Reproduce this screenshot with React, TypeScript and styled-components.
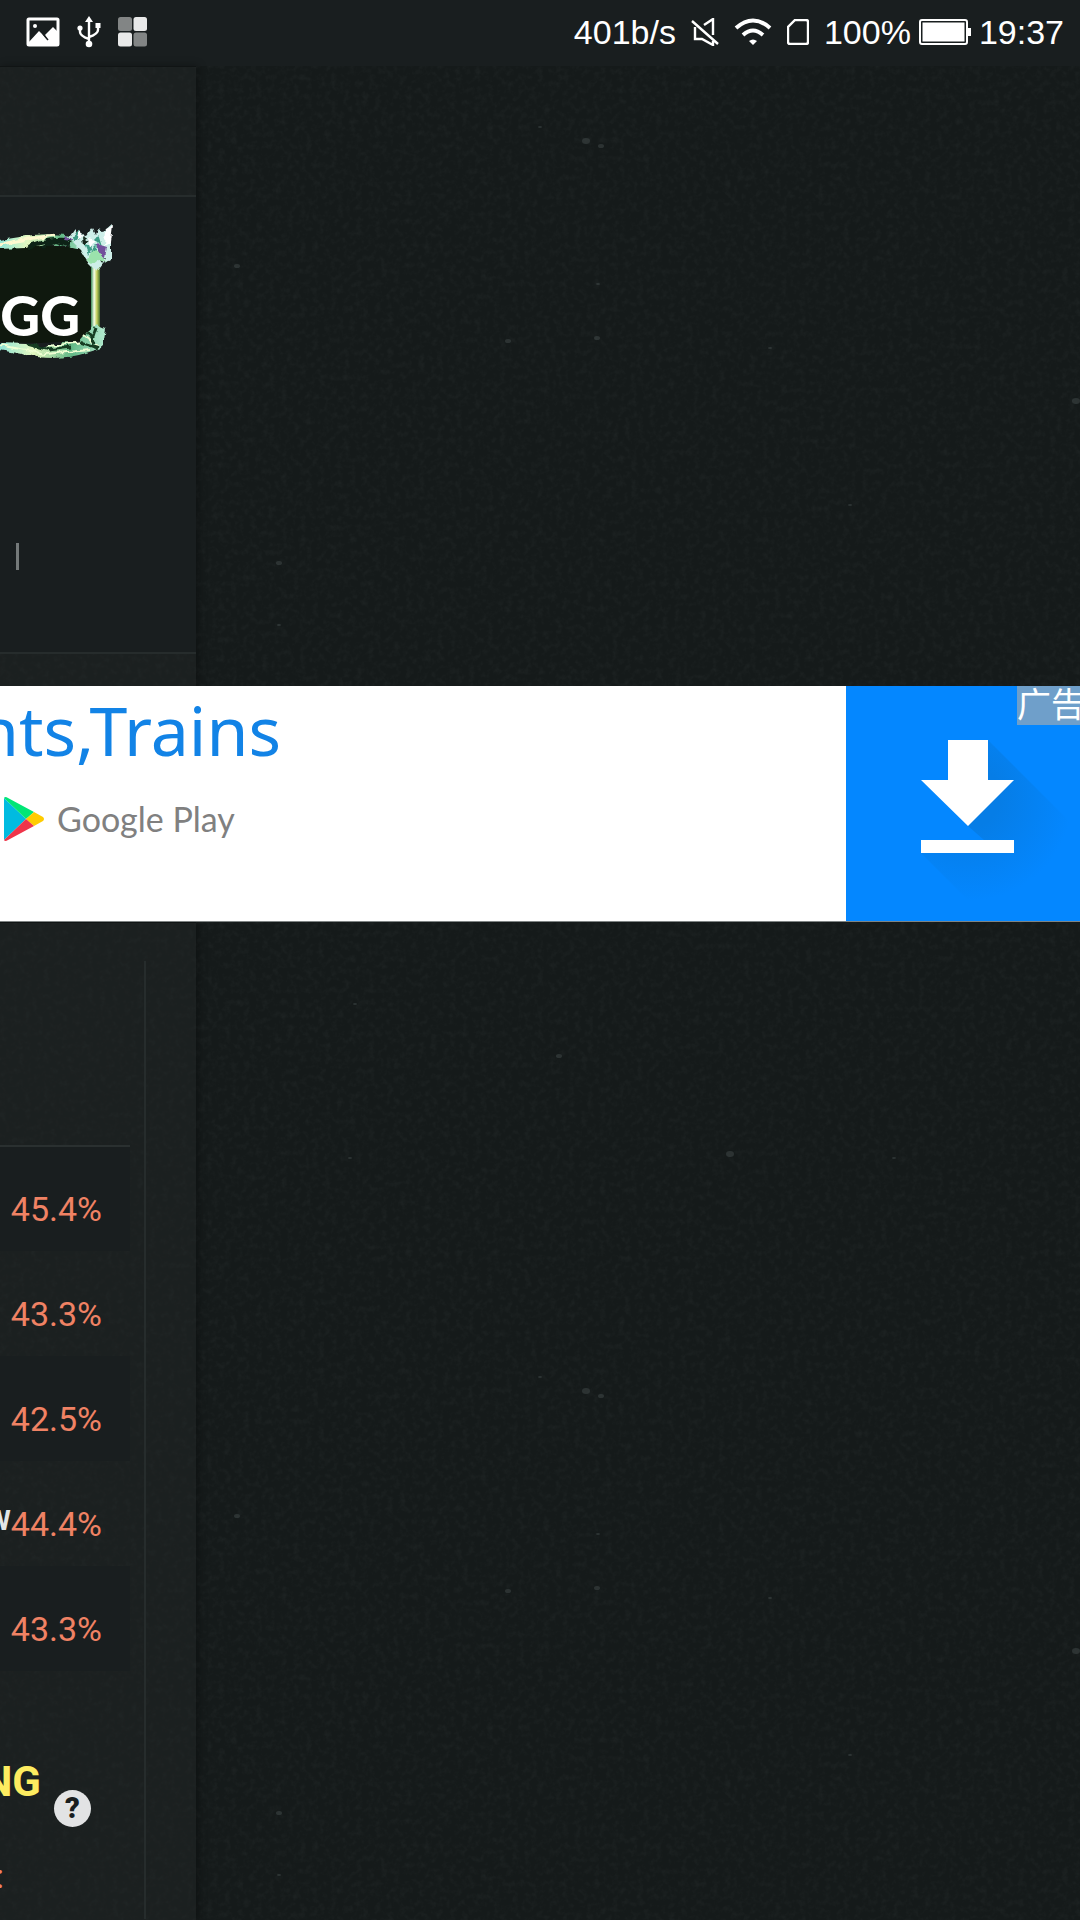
import React from "react";
import styled, { createGlobalStyle } from "styled-components";

const Global = createGlobalStyle`
  * { box-sizing: border-box; }
  html, body { margin: 0; background: #141a1a; }
  body { overflow-x: hidden; font-family: Roboto, "Noto Sans", sans-serif; }
`;

const Screen = styled.main`
  position: relative;
  isolation: isolate;
  display: flex;
  flex-direction: column;
  min-height: 100vh;
  overflow: hidden;
`;

const Backdrop = styled.svg`
  position: absolute;
  inset: 0;
  z-index: -1;
  width: 100%;
  height: 100%;
`;

const StatusBar = styled.header`
  display: flex;
  align-items: center;
  justify-content: space-between;
  height: 66px;
  padding: 0 16px 2px 26px;
  background: #191e1f;
  color: #fff;
  font: 34px/40px "Liberation Sans", Arial, sans-serif;
`;

const StatusGroup = styled.div<{ $gap: number }>`
  display: flex;
  align-items: center;
  gap: ${(p) => p.$gap}px;
  svg { display: block; flex: none; }
`;

const Panel = styled.section<{ $grow?: boolean }>`
  width: 196px;
  flex: ${(p) => (p.$grow ? "1 0 auto" : "none")};
  background: rgba(35, 40, 40, 0.45);
  border-top: 1px solid #101414;
  box-shadow: 2px 0 8px rgba(0, 0, 0, 0.35);
`;

const PanelTop = styled.div`
  height: 128px;
`;

const Hero = styled.div`
  display: flex;
  flex-direction: column;
  justify-content: space-between;
  height: 459px;
  padding: 27px 0 82px;
  border-top: 2px solid #262c2c;
  border-bottom: 2px solid #262c2c;
  background: #191e1f;
`;

const LogoLink = styled.a`
  display: block;
  width: 118px;
  height: 138px;
`;

const LogoText = styled.text`
  font: 900 55px Lato, sans-serif;
  fill: #fff;
`;

const Divider = styled.span`
  width: 3px;
  height: 27px;
  margin-left: 16px;
  background: #747979;
`;

const PanelGap = styled.div`
  height: 32px;
`;

const Ad = styled.aside`
  position: relative;
  display: flex;
  justify-content: space-between;
  height: 236px;
  background: #fff;
  border-bottom: 1px solid #7f8484;
`;

const AdCopy = styled.a`
  display: flex;
  flex-direction: column;
  gap: 20px;
  width: 281px;
  overflow: hidden;
  text-decoration: none;
`;

const AdTitle = styled.span`
  display: flex;
  justify-content: flex-end;
  font: 68px/88px "Noto Sans", sans-serif;
  color: #1283e6;
`;

const Store = styled.span`
  display: flex;
  align-items: center;
  gap: 12px;
  padding-left: 3px;
  font: 34px/50px Lato, sans-serif;
  color: #808080;
  white-space: nowrap;
`;

const Download = styled.button`
  width: 234px;
  padding: 0;
  border: 0;
  background: #0487ff;
  svg { display: block; }
`;

const AdTag = styled.span`
  position: absolute;
  top: 0;
  right: 0;
  width: 63px;
  height: 39px;
  overflow: hidden;
  background: #6f9fca;
  color: #fff;
  font: 34px/34px "Noto Sans CJK SC", sans-serif;
  white-space: nowrap;
`;

const Stats = styled.div`
  width: 146px;
  min-height: 958px;
  margin-top: 38px;
  padding-top: 184px;
  border-right: 2px solid #262c2c;
`;

const Table = styled.table`
  width: 130px;
  border-collapse: collapse;
  border-top: 2px solid #2a3030;
`;

const Row = styled.tr`
  height: 105px;
  &:nth-child(odd) { background: #191e1f; }
`;

const Rate = styled.td`
  padding: 20px 0 0;
  font-size: 34px;
  line-height: 40px;
  color: #f08264;
`;

const RateLine = styled.div`
  display: flex;
  justify-content: flex-end;
  width: 102px;
`;

const Name = styled.b`
  font-size: 28px;
  line-height: 34px;
  color: #e4e6e6;
`;

const Heading = styled.div`
  display: flex;
  gap: 13px;
  width: 91px;
  justify-content: flex-end;
  margin-top: 86px;
`;

const Title = styled.h2`
  margin: 0;
  font-size: 42px;
  line-height: 50px;
  color: #fdec60;
`;

const Help = styled.button`
  flex: none;
  width: 37px;
  height: 37px;
  margin-top: 33px;
  padding: 0;
  border: 0;
  border-radius: 50%;
  background: #e2e3e4;
  color: #191e1f;
  font: 900 29px/37px Roboto, sans-serif;
`;

const Label = styled.div`
  display: flex;
  justify-content: flex-end;
  width: 4px;
  margin-top: 29px;
  font-size: 34px;
  line-height: 40px;
  color: #f08264;
`;

const specks = [
  [586, 141, 4], [601, 146, 3], [237, 266, 3], [508, 341, 3], [598, 284, 2],
  [1076, 401, 4], [279, 563, 3], [279, 625, 2], [540, 127, 2], [355, 1004, 2],
  [559, 1056, 3], [730, 1154, 4], [350, 1158, 2], [894, 1158, 2], [975, 1268, 2],
  [770, 348, 2], [597, 338, 3], [850, 505, 2],
];

const rates = [
  { rate: "45.4%" }, { rate: "43.3%" }, { rate: "42.5%" },
  { rate: "44.4%", name: "W" }, { rate: "43.3%" },
];

const Texture = () => (
  <Backdrop aria-hidden="true">
    <defs>
      <filter id="grain" x="0" y="0" width="100%" height="100%">
        <feTurbulence type="fractalNoise" baseFrequency="0.16" numOctaves="3" seed="4" />
        <feColorMatrix values="0 0 0 0 .4  0 0 0 0 .46  0 0 0 0 .46  .11 0 0 0 -.05" />
      </filter>
      <pattern id="specks" width="1280" height="1250" patternUnits="userSpaceOnUse">
        {specks.map(([x, y, r]) => (
          <ellipse key={`${x}-${y}`} cx={x} cy={y} rx={r} ry={r - 1} fill="#465050" opacity=".45" />
        ))}
      </pattern>
    </defs>
    <rect width="100%" height="100%" fill="#151a1a" />
    <rect width="100%" height="100%" filter="url(#grain)" />
    <rect width="100%" height="100%" fill="url(#specks)" />
  </Backdrop>
);

const PictureIcon = () => (
  <svg width="34" height="30" viewBox="0 0 34 30">
    <rect x="2" y="2" width="30" height="26" rx="1" fill="none" stroke="#fff" strokeWidth="3" />
    <circle cx="9" cy="9" r="2" fill="#fff" />
    <path d="M2 26 13 14l8 8-2-4 8-8 5 5v12H2z" fill="#fff" />
    <path d="m17 17 5 6" stroke="#191e1f" strokeWidth="1.5" />
  </svg>
);

const UsbIcon = () => (
  <svg width="24" height="32" viewBox="0 0 24 32" fill="none" stroke="#fff" strokeWidth="2.4">
    <path d="M12 4v24M3 12v4q0 4 9 7M21 10v4q0 4-9 7" />
    <path d="m12 0 4 6H8zM18.500 7h5v5h-5z" fill="#fff" stroke="none" />
    <circle cx="3" cy="12" r="2.600" fill="#fff" stroke="none" />
    <circle cx="12" cy="28" r="3.300" fill="#fff" stroke="none" />
  </svg>
);

const TilesIcon = () => (
  <svg width="30" height="30" viewBox="0 0 30 30">
    <rect width="14" height="14" rx="2.500" fill="#828585" />
    <rect x="15.500" width="13.500" height="14" rx="2.500" fill="#e8e9e9" />
    <rect y="15.500" width="14" height="14" rx="2.500" fill="#e8e9e9" />
    <rect x="15.500" y="15.500" width="13.500" height="14" rx="2.500" fill="#828585" />
  </svg>
);

const MuteIcon = () => (
  <svg width="28" height="28" viewBox="0 0 28 28" fill="none" stroke="#fff" strokeWidth="2.4">
    <path d="m1 3 26 23M13 7l9-6v16M4 9v12h7l11 6v-4" />
  </svg>
);

const WifiIcon = () => (
  <svg width="38" height="28" viewBox="0 0 38 28" fill="none" stroke="#fff" strokeWidth="4">
    <path d="M2 10q17-15 34 0M9 17q10-9 20 0" />
    <path d="M15 23q4-3 8 0l-4 4z" fill="#fff" stroke="none" />
  </svg>
);

const SimIcon = () => (
  <svg width="22" height="26" viewBox="0 0 22 26" fill="none" stroke="#fff" strokeWidth="2.400">
    <path d="M8 1h11q2 0 2 2v20q0 2-2 2H3q-2 0-2-2V8z" />
  </svg>
);

const BatteryIcon = () => (
  <svg width="52" height="26" viewBox="0 0 52 26">
    <rect x="1" y="1" width="47" height="24" rx="2" fill="none" stroke="#fff" strokeWidth="2" />
    <path d="M3.500 3.500h42v19h-42zM49 9h3v8h-3z" fill="#fff" />
  </svg>
);

const Emblem = () => (
  <svg width="118" height="138" viewBox="0 0 118 138" role="img" aria-label="GG">
    <defs>
      <linearGradient id="vine" x1="0" x2="1">
        <stop offset="0" stopColor="#7fe0d8" />
        <stop offset=".35" stopColor="#e4f8c0" />
        <stop offset=".7" stopColor="#62b886" />
        <stop offset="1" stopColor="#b4ecd0" />
      </linearGradient>
      <linearGradient id="stem" x1="0" x2="1">
        <stop offset="0" stopColor="#3c8a58" />
        <stop offset=".35" stopColor="#f4ffe8" />
        <stop offset=".65" stopColor="#c3cf5c" />
        <stop offset="1" stopColor="#3f6a2c" />
      </linearGradient>
      <filter id="rough" x="-10%" y="-10%" width="120%" height="120%">
        <feTurbulence type="fractalNoise" baseFrequency=".13" numOctaves="2" seed="7" />
        <feDisplacementMap in="SourceGraphic" scale="6" xChannelSelector="R" yChannelSelector="G" />
      </filter>
    </defs>
    <path d="M-4 22 30 21 92 24v92L40 119-4 118z" fill="#0f180e" />
    <path d="M91 32h9v76l-9 6z" fill="url(#stem)" />
    <g filter="url(#rough)">
      <path d="M-6 17 20 13Q40 9 66 11L78 14l12 13-22-5Q44 18 26 24L-6 25z" fill="url(#vine)" />
      <path d="M-6 21 28 15 54 11" stroke="#fff9d0" strokeWidth="3" fill="none" />
      <path d="M28 24Q42 14 70 16M42 23l15-6 14 4" stroke="#0b2414" strokeWidth="4" fill="none" />
      <path d="m68 14 6-9 4 5 4 1 4 1 6-8 3 6 3-5 5 2 8-7v35l-8 5-6 8-8-8-9-14z" fill="#cdeee8" />
      <path d="m72 13 8-7 1 9-8 3zM98 10l4 13-8-8zM90 27l7-7-2 14zM84 20l8 2-4 8z" fill="#3c9c86" />
      <path d="m97 20 10 3-2 10-8-3zM66 12l6 5-8-1z" fill="#73509c" />
      <path d="M83 13l6 4-5 4zM99 35l8-2-4 7z" fill="#14271c" />
      <path d="m105 5 8-3-2 16-7 4zM80 7l4 6-7 3zM88 14l7 2-5 8z" fill="#fff" />
      <path d="M86 36l6-10 10 4 5 8-10-2-5 4z" fill="#9be2ac" />
      <path d="M-6 119 26 120 42 124 62 118 78 119 88 107 96 100 105 104 102 124 86 129Q64 136 38 133L-6 125z" fill="url(#vine)" />
      <path d="M0 121 45 130 90 126M48 122 83 118M84 111l14 12" stroke="#efffd4" strokeWidth="2" fill="none" />
      <path d="M27 120 49 126 71 123M80 118l19 6M88 108l6 11M96 104l-4 12" stroke="#123c20" strokeWidth="3" fill="none" />
    </g>
    <LogoText x="80" y="112" textAnchor="end">GG</LogoText>
  </svg>
);

const PlayIcon = () => (
  <svg width="42" height="46" viewBox="0 0 42 46">
    <path d="M1 2v42l22-21z" fill="#00bbe0" />
    <path d="M1 2Q2 0 5 2L31 16l-8 7z" fill="#00e676" />
    <path d="M31 16 40 21q2 2 0 4l-9 5-8-7z" fill="#ffcc00" />
    <path d="M1 44q1 2 4 0l26-14-8-7z" fill="#ef354a" />
  </svg>
);

const DownloadIcon = () => (
  <svg width="234" height="235" viewBox="0 0 234 235">
    <defs>
      <radialGradient id="cast" gradientUnits="userSpaceOnUse" cx="122" cy="110" r="105">
        <stop offset=".3" stopColor="#067de6" />
        <stop offset="1" stopColor="#0487ff" />
      </radialGradient>
    </defs>
    <path d="M142 54 234 146V235H143L75 167 138 154 122 140z" fill="url(#cast)" />
    <path d="M102 54h40v40h26l-46 46-47-46h27zM75 154h93v13H75z" fill="#fff" />
  </svg>
);

export default function App() {
  return (
    <Screen>
      <Global />
      <Texture />
      <StatusBar>
        <StatusGroup $gap={17}>
          <PictureIcon /><UsbIcon /><TilesIcon />
        </StatusGroup>
        <StatusGroup $gap={8}>
          <StatusGroup $gap={15}>
            <span>401b/s</span>
            <MuteIcon /><WifiIcon /><SimIcon />
            <span>100%</span>
          </StatusGroup>
          <BatteryIcon />
          <time>19:37</time>
        </StatusGroup>
      </StatusBar>
      <Panel>
        <PanelTop />
        <Hero>
          <LogoLink href="#home"><Emblem /></LogoLink>
          <Divider />
        </Hero>
        <PanelGap />
      </Panel>
      <Ad>
        <AdCopy href="#store">
          <AdTitle>nts,Trains</AdTitle>
          <Store><PlayIcon />Google Play</Store>
        </AdCopy>
        <Download aria-label="Download"><DownloadIcon /></Download>
        <AdTag>广告</AdTag>
      </Ad>
      <Panel $grow>
        <Stats>
          <Table>
            <tbody>
              {rates.map((r, i) => (
                <Row key={i}>
                  <Rate>
                    <RateLine>{r.name && <Name>{r.name}</Name>}{r.rate}</RateLine>
                  </Rate>
                </Row>
              ))}
            </tbody>
          </Table>
          <Heading>
            <Title>NG</Title>
            <Help aria-label="Help">?</Help>
          </Heading>
          <Label>:</Label>
        </Stats>
      </Panel>
    </Screen>
  );
}
